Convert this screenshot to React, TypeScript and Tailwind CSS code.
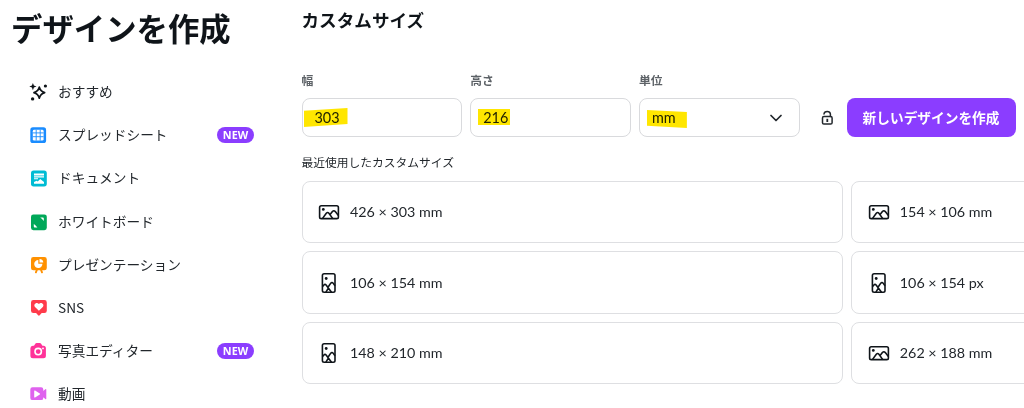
import type { ReactNode } from 'react';
import { ChevronDown } from 'lucide-react';

interface MenuItem {
  label: string;
  icon: ReactNode;
  isNew?: boolean;
}

interface CustomSize {
  label: string;
  portrait?: boolean;
}

const menuItems: MenuItem[] = [
  {
    label: 'おすすめ',
    icon: (
      <>
        <path d="M10.3 4c.8 3.4 2.1 4.8 5.4 5.6-3.3.8-4.6 2.2-5.4 5.6-.8-3.4-2.1-4.8-5.4-5.6 3.3-.8 4.6-2.2 5.4-5.6Z" fill="none" stroke="#0f1419" strokeWidth="1.6" strokeLinejoin="round" />
        <path d="m3.9 0 1 2.6 2.6 1-2.6 1-1 2.6-1-2.600-2.600-1 2.600-1Z" fill="#0f1419" />
        <circle cx="16.4" cy="3" r="1.6" fill="#0f1419" />
        <circle cx="3.6" cy="15.9" r="1.7" fill="#0f1419" />
      </>
    ),
  },
  {
    label: 'スプレッドシート',
    isNew: true,
    icon: (
      <>
        <rect x="1.3" y="1.3" width="15.8" height="15.8" rx="2.6" fill="#1a8cff" />
        <rect x="3.8" y="3.8" width="10.8" height="10.8" rx="1.4" fill="#fff" />
        <path d="M3.8 6.9h10.8M3.8 10.7h10.8M7.2 3.8v10.8M11.2 3.8v10.8" stroke="#1a8cff" strokeWidth=".9" />
      </>
    ),
  },
  {
    label: 'ドキュメント',
    icon: (
      <>
        <rect x="2" y="1.6" width="15.8" height="15.8" rx="2.6" fill="#00bcd4" />
        <path d="M5 4.600h10v2H5zM5 7.300h10v1.200H5zM5 9.300h4v.9H5z" fill="#fff" />
        <path d="M5 14.700v-1.800l2.600-1.200 1.200.7 2.400-2.500 3.800 3v1.800Z" fill="#fff" />
      </>
    ),
  },
  {
    label: 'ホワイトボード',
    icon: (
      <>
        <rect x="2" y="1.4" width="15.8" height="15.8" rx="2.4" fill="#00a859" />
        <path d="M11.2 4.500h2.700q.9 0 .9.9v2.700l-1.100-1.300-1.200-1.200ZM4.800 10.900l1.300 1.100 1.200 1.200 1.100 1.300H5.700q-.9 0-.9-.9Z" fill="#fff" />
      </>
    ),
  },
  {
    label: 'プレゼンテーション',
    icon: (
      <>
        <rect x="2" y="1" width="15.8" height="13.3" rx="2.4" fill="#ff9100" />
        <path d="m8.2 13-1.3 3.3M11.7 13l1.3 3.3" stroke="#ff9100" strokeWidth="1.9" strokeLinecap="round" />
        <path d="M9.3 3.9v3.900h4.100a4.100 4.100 0 1 1-4.100-3.900Z" fill="#fff" />
        <path d="M10.5 2.900a3.900 3.900 0 0 1 3.800 3.700h-3.800Z" fill="#fff" />
      </>
    ),
  },
  {
    label: 'SNS',
    icon: (
      <>
        <path d="M4.4 1h11a2.4 2.4 0 0 1 2.4 2.4v8.3a2.4 2.4 0 0 1-2.4 2.4h-2.7l-2 2.2q-.8.8-1.6 0l-2-2.2H4.4A2.4 2.4 0 0 1 2 11.7V3.4A2.4 2.4 0 0 1 4.4 1Z" fill="#ff3b4b" />
        <path d="M9.9 11.7 6 7.9C3.9 5.6 7.6 2.2 9.9 5c2.300-2.800 6 .6 3.900 2.900Z" fill="#fff" />
      </>
    ),
  },
  {
    label: '写真エディター',
    isNew: true,
    icon: (
      <>
        <path d="M4 3.700h1l1.300-1.900q.5-.7 1.300-.7h3.200q.8 0 1.300.7l1.300 1.900h1a2.500 2.500 0 0 1 2.500 2.500v7.500a2.500 2.500 0 0 1-2.500 2.500H3.900a2.500 2.500 0 0 1-2.500-2.500V6.200A2.500 2.500 0 0 1 4 3.700Z" fill="#ff3399" />
        <circle cx="9.2" cy="9.6" r="3.2" fill="none" stroke="#fff" strokeWidth="1.6" />
        <circle cx="14" cy="6.4" r=".9" fill="#fff" />
      </>
    ),
  },
  {
    label: '動画',
    icon: (
      <>
        <path d="M3.5 2.300h8.600a2.200 2.200 0 0 1 2.200 2.200v1.400l2-1.600q1-.7 1 .5v8.600q0 1.200-1 .5l-2-1.600v.6a2.200 2.200 0 0 1-2.200 2.200H3.500a2.200 2.200 0 0 1-2.200-2.200V4.500a2.200 2.200 0 0 1 2.200-2.200Z" fill="#df62ee" />
        <path d="M5.200 6.100q0-1 .9-.5l4.700 2.900q.7.500 0 1l-4.700 2.900q-.9.500-.9-.5Z" fill="#fff" />
      </>
    ),
  },
];

const recentSizes: CustomSize[] = [
  { label: '426 × 303 mm' },
  { label: '154 × 106 mm' },
  { label: '106 × 154 mm', portrait: true },
  { label: '106 × 154 px', portrait: true },
  { label: '148 × 210 mm', portrait: true },
  { label: '262 × 188 mm' },
];

function SizeIcon({ portrait }: { portrait?: boolean }) {
  return (
    <svg className="mt-px h-[22px] w-[22px] shrink-0" viewBox="0 0 22 22" fill="none" stroke="#0f1419" strokeWidth="1.6" strokeLinejoin="round">
      {portrait ? (
        <>
          <rect x="4.4" y="1.8" width="12.6" height="18.4" rx="1.7" />
          <circle cx="8.2" cy="6.5" r="1.4" fill="#0f1419" stroke="none" />
          <path d="m4.4 14.6 1.5-1.600q1.100-1.100 2.200 0l5.400 7.200M10 15.300l2.600-3.900q1.400-1.800 2.700 0l1.700 2.400M7.900 20.200l2.300-3.800" />
        </>
      ) : (
        <>
          <rect x="1.6" y="4.8" width="18.8" height="12.8" rx="1.7" />
          <circle cx="5.3" cy="8.4" r="1.4" fill="#0f1419" stroke="none" />
          <path d="m4.400 17.600 3.900-5.400q1.300-1.500 2.600 0l3.900 5.400M12.100 13.500l2.300-2.900q1.500-1.600 2.900 0l3.100 3.800" />
        </>
      )}
    </svg>
  );
}

function NewBadge() {
  return (
    <span className="ml-auto flex h-4 w-[37px] items-center justify-center rounded-full bg-[#8b3dff] pt-px font-['Noto_Sans',sans-serif] text-[10.8px] leading-none font-bold text-white">
      NEW
    </span>
  );
}

function Field({ label, children }: { label: string; children: ReactNode }) {
  return (
    <div className="w-[160.7px] shrink-0">
      <div className="mb-[9px] h-[18px] text-[11.8px] leading-[18px] font-bold text-[#5d6267]">{label}</div>
      <div className="relative flex h-[39px] items-center rounded-lg border border-[#d9dadd] px-3 font-['Lato',sans-serif] text-[14.4px] text-[#22272c]">
        {children}
      </div>
    </div>
  );
}

export default function App() {
  return (
    <div className="flex h-[408px] w-[1024px] overflow-hidden bg-white font-['Noto_Sans_CJK_JP',sans-serif] text-[#0f1419]">
      <aside className="w-[301.5px] shrink-0 pl-[11px]">
        <h1 className="mt-[4px] h-[48px] text-[31.4px] leading-[48px] font-bold whitespace-nowrap">デザインを作成</h1>
        <nav className="mt-[18px] w-[243px] pl-[18px]">
          {menuItems.map((item) => (
            <div key={item.label} className="flex h-[43.2px] items-center">
              <svg className="mt-[2px] mr-[10px] h-[19px] w-[19px] shrink-0" viewBox="0 0 19 19">
                {item.icon}
              </svg>
              <span className="mb-px text-[13.7px] leading-5 whitespace-nowrap text-[#22272c]">{item.label}</span>
              {item.isNew && <NewBadge />}
            </div>
          ))}
        </nav>
      </aside>

      <main className="w-[722.5px] shrink-0">
        <h2 className="mt-[6px] h-[28px] text-[17.6px] leading-[28px] font-bold">カスタムサイズ</h2>

        <div className="mt-[37px] flex items-end gap-2">
          <Field label="幅">
            <span>303</span>
            <span className="absolute top-[9px] left-[1px] h-[19px] w-[44px] bg-[#ffe600] mix-blend-multiply [clip-path:polygon(0_14%,100%_0,100%_84%,0_100%)]" />
          </Field>
          <Field label="高さ">
            <span>216</span>
            <span className="absolute top-[10px] left-[7px] h-4 w-8 bg-[#ffe600] mix-blend-multiply" />
          </Field>
          <Field label="単位">
            <span>mm</span>
            <ChevronDown className="mr-px ml-auto h-5 w-5" strokeWidth={2.1} />
            <span className="absolute top-[11px] left-[7px] h-[18px] w-10 bg-[#ffe600] mix-blend-multiply [clip-path:polygon(0_0,100%_11%,100%_100%,0_87%)]" />
          </Field>
          <div className="flex h-[39px] w-[39px] items-center justify-center">
            <svg className="h-4 w-4" viewBox="0 0 16 16" fill="none" stroke="#22272c" strokeWidth="1.5">
              <rect x="3.5" y="6.5" width="9.6" height="7.6" rx="1.4" />
              <path d="M5 4C5.4.6 11 .6 11.4 4v2.500" strokeLinecap="round" />
              <path d="M8.3 8.800v3.200" strokeWidth="1.8" />
            </svg>
          </div>
          <button className="-ml-[8px] h-[39px] w-[169px] shrink-0 rounded-lg bg-[#8b3dff] pb-px text-[13.7px] font-bold whitespace-nowrap text-white">
            新しいデザインを作成
          </button>
        </div>

        <div className="mt-[16px] mb-[9.5px] h-[18px] text-[11.75px] leading-[18px] text-[#22272c]">
          最近使用したカスタムサイズ
        </div>

        <div className="grid grid-cols-[541.8px_541.8px] gap-2">
          {recentSizes.map((size) => (
            <div key={size.label} className="flex h-[62.6px] items-center rounded-lg border border-[#dedfe2] pl-[15.5px]">
              <SizeIcon portrait={size.portrait} />
              <span className="ml-[10px] font-['Lato',sans-serif] text-[14.3px] text-[#22272c]">{size.label}</span>
            </div>
          ))}
        </div>
      </main>
    </div>
  );
}
